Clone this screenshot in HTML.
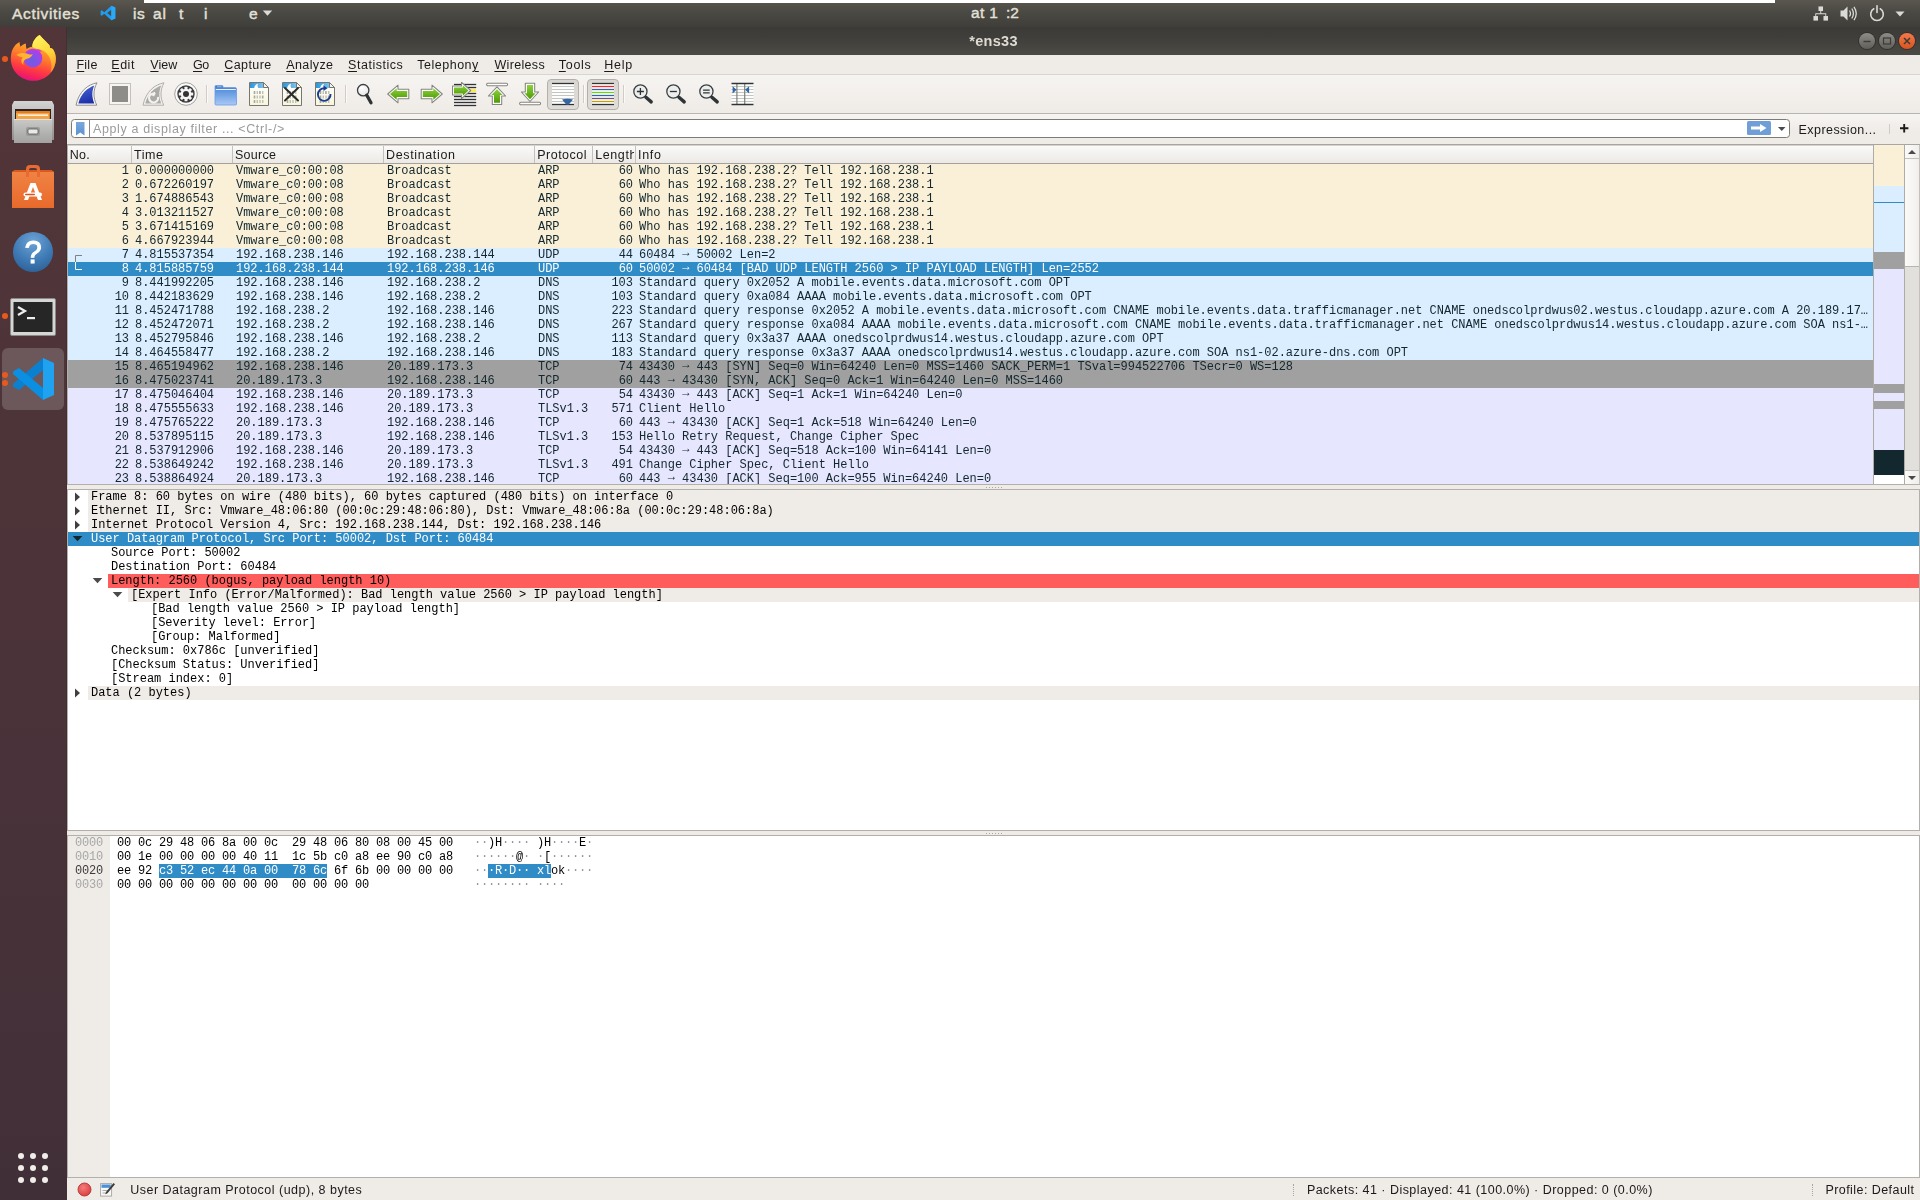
<!DOCTYPE html>
<html><head><meta charset="utf-8"><title>*ens33</title>
<style>
html,body{margin:0;padding:0;}
body{width:1920px;height:1200px;overflow:hidden;position:relative;background:#efebe7;font-family:"Liberation Sans",sans-serif;font-size:13px;color:#1a1a1a;}
.abs{position:absolute;}
svg{display:block;}
/* top bar */
#topbar{position:absolute;left:0;top:0;width:1920px;height:27px;background:linear-gradient(#5a5750 0px,#4b4943 12px,#3f3e3a 27px);}
#topstrip{position:absolute;left:144px;top:0;width:1631px;height:3px;background:#fff;}
.tb{position:absolute;color:#e4e0d8;font-size:15.5px;line-height:18px;top:5px;white-space:pre;-webkit-text-stroke:0.4px #e4e0d8;}
/* dock */
#dock{position:absolute;left:0;top:27px;width:67px;height:1173px;background:linear-gradient(#523538 0%,#4d3439 35%,#483239 70%,#412f38 100%);}
/* title bar */
#titlebar{position:absolute;left:67px;top:27px;width:1853px;height:28px;background:linear-gradient(#3b3a36 0px,#3f3e3a 10px,#4b4a45 28px);}
#title{position:absolute;left:0;width:1853px;top:5px;text-align:center;color:#dfdbd2;font-weight:bold;font-size:14.5px;line-height:18px;letter-spacing:0.3px;}
/* menubar */
#menubar{position:absolute;left:67px;top:55px;width:1853px;height:19px;background:#efebe7;border-bottom:1px solid #d9d5d0;}
.mi{position:absolute;top:2px;font-size:12.5px;line-height:16px;color:#1a1a1a;white-space:pre;}
.mi u{text-decoration:underline;text-underline-offset:2px;text-decoration-thickness:1px;}
#toolbar{position:absolute;left:67px;top:75px;width:1853px;height:38px;background:linear-gradient(#f6f4f1,#efebe7);border-bottom:1px solid #b9b6b1;}
#filterbar{position:absolute;left:67px;top:114px;width:1853px;height:30px;background:linear-gradient(#f7f5f2,#efebe7 60%);}
#finput{position:absolute;left:4px;top:5px;width:1719px;height:19px;box-sizing:border-box;border:1px solid #7e7b76;border-radius:3.5px;background:#fff;}
/* mono */
.mono{font-family:"Liberation Mono",monospace;font-size:12px;line-height:14px;}
.wbtn{position:absolute;top:6px;width:16px;height:16px;border-radius:8px;background:linear-gradient(#8e8d87,#5f5e59);box-shadow:0 0 0 1px #32312e;}
.wclose{background:linear-gradient(#f47a49,#d9541f);}
.ddot{position:absolute;width:6px;height:6px;border-radius:3px;background:#e8591d;}
#plist{position:absolute;left:68px;top:146px;width:1805px;height:338px;background:#fff;overflow:hidden;}
#phead{position:absolute;left:0;top:0;width:1805px;height:17px;background:linear-gradient(#fbfaf9,#ece9e5);border-bottom:1px solid #a5a29d;}
.hc{position:absolute;top:1px;font-size:12.5px;line-height:16px;color:#1a1a1a;white-space:pre;}
.hs{position:absolute;top:0;width:1px;height:17px;background:#c4c1bc;}
#prows{position:absolute;left:0;top:18px;width:1805px;}
.pr{position:relative;height:14px;width:1805px;color:#12272e;}
.pr span{position:absolute;top:0;white-space:pre;letter-spacing:-0.014px;}
.c1{left:0;width:61px;text-align:right;}
.c2{left:67px;}
.c3{left:168px;}
.c4{left:319px;}
.c5{left:470px;}
.c6{left:521px;width:44px;text-align:right;}
.c7{left:571px;}
.arp{background:#faf0d7;}
.udp{background:#daeeff;}
.tcp{background:#e7e6ff;}
.syn{background:#a0a0a0;}
.sel{background:#308cc6;color:#fff;}
#detail{position:absolute;left:68px;top:490px;width:1852px;height:340px;background:#fff;overflow:hidden;}
.dbg{position:absolute;height:14px;}
.dt{position:absolute;white-space:pre;height:14px;letter-spacing:-0.014px;}
#hexp{position:absolute;left:68px;top:836px;width:1852px;height:341px;background:#fff;overflow:hidden;}
#hexoff{position:absolute;left:0;top:0;width:42px;height:343px;background:#efebe7;}
.hx{position:absolute;white-space:pre;letter-spacing:-0.2px;color:#000;}
#status{position:absolute;left:67px;top:1178px;width:1853px;height:22px;background:#efebe7;}
.st{position:absolute;top:4px;font-size:12.5px;line-height:16px;white-space:pre;color:#1a1a1a;}
.tbp{position:absolute;top:4px;width:32px;height:31px;border:1px solid #b3b0ab;border-radius:4px;background:linear-gradient(#d9d6d2,#e0ddd9);box-sizing:border-box;}
#mmap{position:absolute;left:1874px;top:145px;width:30px;height:339px;background:#fff;overflow:hidden;}
#mmap div{position:absolute;left:0;width:30px;}
#vsb{position:absolute;left:1904px;top:145px;width:16px;height:339px;background:#e2e0dc;overflow:hidden;}
.hx i{font-style:normal;color:#8e9598;}
#win{position:absolute;left:0;top:0;width:1920px;height:1200px;will-change:transform;}
.pr b{font-weight:normal;position:relative;top:-2px;}

</style></head>
<body>
<div id="topbar">
 <div class="tb" style="left:12px;letter-spacing:0.68px;">Activities</div>
 <svg class="abs" style="left:100px;top:5px" width="16" height="16" viewBox="0 0 16 16"><path d="M11.300 0.800 L15.300 2.500 V13.500 L11.300 15.200 L4.300 8.800 L1.800 10.800 L0.600 10.100 V5.900 L1.800 5.200 L4.300 7.200 Z M11.300 4.700 L7.200 8 L11.300 11.300 Z" fill="#1f9cf0" fill-rule="evenodd"/><path d="M11.300 0.800 L15.300 2.500 V13.500 L11.300 15.200 Z" fill="#2aa9f5"/><path d="M11.300 4.700 L7.200 8 L11.300 11.300 Z" fill="#4b4943" opacity="0"/></svg>
 <div class="tb" style="left:133px;letter-spacing:0.46px;">is</div>
 <div class="tb" style="left:153px;letter-spacing:0.98px;">al</div>
 <div class="tb" style="left:179px;">t</div>
 <div class="tb" style="left:204px;">i</div>
 <div class="tb" style="left:249px;">e</div>
 <svg class="abs" style="left:262px;top:10px" width="11" height="7" viewBox="0 0 11 7"><path d="M0.800 0.500 H10.200 L5.500 5.800 Z" fill="#dadad6"/></svg>
 <div class="tb" style="left:971px;top:4px;letter-spacing:0.36px;">at 1</div>
 <div class="tb" style="left:1006px;top:4px;letter-spacing:0px;">:2</div>
 <!-- system tray -->
 <svg class="abs" style="left:1812.500px;top:5.700px" width="15.500" height="15.500" viewBox="0 0 17 17" fill="#dadad6"><rect x="6" y="0.500" width="5" height="5"/><rect x="0.500" y="11" width="5" height="5"/><rect x="11.500" y="11" width="5" height="5"/><path d="M8 5 H9 V8 H14.500 V11 H13.500 V9 H3.500 V11 H2.500 V8 H8 Z"/></svg>
 <svg class="abs" style="left:1840px;top:5px" width="18" height="17" viewBox="0 0 18 17"><path d="M0.500 5.500 H3.500 L7.500 1.500 V15.500 L3.500 11.500 H0.500 Z" fill="#dadad6"/><path d="M9.500 5.500 Q11.500 8.500 9.500 11.500 M11.800 3.500 Q15 8.500 11.800 13.500 M14 1.800 Q18.500 8.500 14 15.200" fill="none" stroke="#dadad6" stroke-width="1.300"/></svg>
 <svg class="abs" style="left:1869px;top:5px" width="16" height="17" viewBox="0 0 16 17"><path d="M4.800 3.800 A6.300 6.300 0 1 0 11.200 3.800" fill="none" stroke="#dadad6" stroke-width="1.600" stroke-linecap="round"/><path d="M8 0.800 V7.500" stroke="#dadad6" stroke-width="1.600" stroke-linecap="round"/></svg>
 <svg class="abs" style="left:1895px;top:11px" width="10" height="6" viewBox="0 0 10 6"><path d="M0.500 0.500 H9.500 L5 5.500 Z" fill="#dadad6"/></svg>
 <div id="topstrip"></div>
</div>

<div id="win">
<div id="dock">
 <!-- coordinates inside dock: y = page_y - 27 -->
 <div class="ddot" style="left:2px;top:29px;"></div>
 <!-- firefox -->
 <svg class="abs" style="left:10px;top:7px" width="47" height="48" viewBox="0 0 47 48">
  <defs>
   <linearGradient id="ffg" gradientUnits="userSpaceOnUse" x1="30" y1="4" x2="18" y2="47"><stop offset="0" stop-color="#ffd03a"/><stop offset="0.2" stop-color="#ffa526"/><stop offset="0.45" stop-color="#ff7a2e"/><stop offset="0.7" stop-color="#ff3f3f"/><stop offset="0.88" stop-color="#f5205e"/><stop offset="1" stop-color="#e01383"/></linearGradient>
   <radialGradient id="ffp" gradientUnits="userSpaceOnUse" cx="22" cy="27" r="11"><stop offset="0" stop-color="#6a5fe0"/><stop offset="0.6" stop-color="#8b4fe8"/><stop offset="1" stop-color="#b53be6"/></radialGradient>
   <linearGradient id="ffy" x1="0.2" y1="0" x2="0.6" y2="1"><stop offset="0" stop-color="#fff45f"/><stop offset="0.6" stop-color="#ffd43a"/><stop offset="1" stop-color="#ff9b2c"/></linearGradient>
  </defs>
  <path d="M29.700 0.900 C33 5 37 8 39.300 11.100 C39.600 12 40 13 40.100 14 C41.500 14 42.500 14.800 43.300 15.700 C45 18.500 45.800 21.500 45.800 24.700 C45.800 37 36 46.800 23.500 46.800 C11 46.800 0.800 37 0.800 24.700 C0.800 20.800 1.500 17.500 3 14.500 C4.500 11.500 7 9.300 9.500 8 C9.600 9.800 9.900 11.400 10.400 12.800 C11.800 11.200 13.700 10 15.800 9.400 C15.800 11.500 16 13.400 16.600 15.100 C18.300 13.900 20.200 13.200 22.300 12.800 C22.300 8 25 3.500 29.700 0.900 Z" fill="url(#ffg)"/>
  <path d="M29.700 0.900 C33 5 37 8 39.300 11.100 C39.600 12 40 13 40.100 14 C41.500 14 42.500 14.800 43.300 15.700 C45 18.500 45.800 21.500 45.800 24.700 C45.800 30 44 35 40.500 38.500 C43 31 41 22 34.500 17.500 C31 15 26 15.500 22.300 12.800 C22.300 8 25 3.500 29.700 0.900 Z" fill="url(#ffy)"/>
  <circle cx="22.900" cy="24.200" r="9.400" fill="url(#ffp)"/>
  <path d="M6.400 20.800 C10 18.500 15 18.500 18 20 C20 20.800 21.800 20.500 22.900 20.200 C21.500 23 19 24.300 16 25 C13.500 26.500 12.800 29 13.500 31 C10.500 28.500 11 25 12.800 23.500 C10.500 23 8 22.500 6.400 20.800 Z" fill="#ffb32e"/>
  <path d="M26.500 15.300 C29 15 31 16.300 31.800 17.800 C30 17.200 28.500 17.500 27.300 18.200 C27.500 17 27.200 16 26.500 15.300 Z" fill="#c53be8"/>
 </svg>
 <!-- files -->
 <svg class="abs" style="left:11px;top:73px" width="44" height="45" viewBox="0 0 44 45">
  <defs><linearGradient id="fg1" x1="0" y1="0" x2="0" y2="1"><stop offset="0" stop-color="#d4d4d2"/><stop offset="1" stop-color="#8f8f8d"/></linearGradient>
  <linearGradient id="fg2" x1="0" y1="0" x2="0" y2="1"><stop offset="0" stop-color="#c9c9c7"/><stop offset="1" stop-color="#a2a2a0"/></linearGradient></defs>
  <path d="M3 1 H41 L43 5 V40 H1 V5 Z" fill="url(#fg1)"/>
  <rect x="4" y="9" width="36" height="10" fill="#2a2320"/>
  <rect x="5" y="11" width="34" height="8" fill="#e67a22"/>
  <rect x="5" y="13" width="33" height="6" fill="#f3a445"/>
  <rect x="7" y="14.5" width="30" height="1.3" fill="#fff"/>
  <path d="M3 19 H41 V43 H3 Z" fill="url(#fg2)"/>
  <rect x="3" y="19" width="38" height="1" fill="#e2e2e0"/>
  <rect x="15" y="27" width="14" height="9" rx="2" fill="#9b9b99"/>
  <rect x="17" y="29" width="10" height="5" rx="1" fill="#e9e9e7" stroke="#555" stroke-width="0.8"/>
 </svg>
 <!-- software -->
 <svg class="abs" style="left:11px;top:137px" width="44" height="45" viewBox="0 0 44 45">
  <defs><linearGradient id="sg" x1="0" y1="0" x2="0" y2="1"><stop offset="0" stop-color="#f08445"/><stop offset="1" stop-color="#e86a2b"/></linearGradient></defs>
  <path d="M1 8 L4 6 H40 L43 8 V44 H1 Z" fill="url(#sg)"/>
  <path d="M4 6 H40 L43 8 H1 Z" fill="#d95a1d"/>
  <path d="M15 13 V5 Q15 1 19 1 H25 Q29 1 29 5 V13 H26 V6 Q26 4 24 4 H20 Q18 4 18 6 V13 Z" fill="#ea6a33"/>
  <path d="M19.5 19 H24.500 L31 36 H27 L22 23 L17 36 H13 Z" fill="#fff"/>
  <rect x="12.500" y="28.500" width="18.500" height="4" rx="2" fill="#fff"/>
  <rect x="14" y="29.700" width="10" height="1.500" rx="0.7" fill="#e3501a"/>
 </svg>
 <!-- help -->
 <svg class="abs" style="left:12px;top:204px" width="42" height="42" viewBox="0 0 42 42">
  <defs><radialGradient id="hg" cx="0.5" cy="0.25" r="0.8"><stop offset="0" stop-color="#6da3d6"/><stop offset="0.6" stop-color="#3f7ab5"/><stop offset="1" stop-color="#2c5f94"/></radialGradient></defs>
  <circle cx="21" cy="21" r="20" fill="url(#hg)"/>
  <text x="21" y="31.500" text-anchor="middle" font-family="Liberation Sans" font-size="31" fill="#fff" stroke="#fff" stroke-width="0.900">?</text>
 </svg>
 <!-- terminal -->
 <div class="ddot" style="left:2px;top:286px;"></div>
 <svg class="abs" style="left:10px;top:271px" width="46" height="38" viewBox="0 0 46 38">
  <rect x="0.500" y="0.500" width="45" height="37" rx="1.500" fill="#d6d6d4" stroke="#8a8a88"/>
  <rect x="3.500" y="4" width="39" height="30" fill="#262626"/>
  <path d="M8 9 L15 13 L8 17" fill="none" stroke="#eee" stroke-width="2.2"/>
  <rect x="17" y="19" width="8" height="2.200" fill="#eee"/>
 </svg>
 <!-- vscode -->
 <div class="abs" style="left:2px;top:321px;width:62px;height:62px;border-radius:6px;background:#6c575b;"></div>
 <div class="ddot" style="left:2px;top:345px;"></div>
 <div class="ddot" style="left:2px;top:353px;"></div>
 <svg class="abs" style="left:11px;top:330px" width="44" height="44" viewBox="0 0 44 44">
  <path d="M32 1 L43 6 V38 L32 43 Z" fill="#1fa2f0"/>
  <path d="M32 1 L32 12 L9 32 L4 29 L1 26 Z" fill="#0a7bcc" opacity="0.001"/>
  <path d="M32 1 V13 L8 33 L2 29.500 V27 Z" fill="#0b80d0"/>
  <path d="M32 43 V31 L8 11 L2 14.500 V17 Z" fill="#0a8fe2"/>
  <path d="M32 13 L20.500 22 L32 31 Z" fill="#6b565a" opacity="0"/>
 </svg>
 <!-- apps -->
 <svg class="abs" style="left:17px;top:1125px" width="32" height="32" viewBox="0 0 32 32" fill="#f0eeeb">
  <circle cx="4" cy="4" r="3"/><circle cx="16" cy="4" r="3"/><circle cx="28" cy="4" r="3"/>
  <circle cx="4" cy="16" r="3"/><circle cx="16" cy="16" r="3"/><circle cx="28" cy="16" r="3"/>
  <circle cx="4" cy="28" r="3"/><circle cx="16" cy="28" r="3"/><circle cx="28" cy="28" r="3"/>
 </svg>
</div>

<div id="titlebar">
 <div id="title">*ens33</div>
 <div class="wbtn" style="left:1792px;"><svg width="16" height="16" viewBox="0 0 16 16"><path d="M4.5 8.5 H11.5" stroke="#3c3b37" stroke-width="1.4"/></svg></div>
 <div class="wbtn" style="left:1812px;"><svg width="16" height="16" viewBox="0 0 16 16"><rect x="4.5" y="5" width="7" height="6" fill="none" stroke="#3c3b37" stroke-width="1.2"/></svg></div>
 <div class="wbtn wclose" style="left:1832px;"><svg width="16" height="16" viewBox="0 0 16 16"><path d="M5 5 L11 11 M11 5 L5 11" stroke="#3c3b37" stroke-width="1.5"/></svg></div>
</div>
<div id="menubar">
 <div class="mi" style="left:9.4px;letter-spacing:0.27px;"><u>F</u>ile</div>
 <div class="mi" style="left:44.3px;letter-spacing:0.51px;"><u>E</u>dit</div>
 <div class="mi" style="left:83.3px;letter-spacing:0.05px;"><u>V</u>iew</div>
 <div class="mi" style="left:126.0px;letter-spacing:-0.52px;"><u>G</u>o</div>
 <div class="mi" style="left:157.3px;letter-spacing:0.41px;"><u>C</u>apture</div>
 <div class="mi" style="left:219.3px;letter-spacing:0.38px;"><u>A</u>nalyze</div>
 <div class="mi" style="left:281.1px;letter-spacing:0.52px;"><u>S</u>tatistics</div>
 <div class="mi" style="left:350.3px;letter-spacing:0.5px;">Telephon<u>y</u></div>
 <div class="mi" style="left:427.4px;letter-spacing:0.33px;"><u>W</u>ireless</div>
 <div class="mi" style="left:491.8px;letter-spacing:0.69px;"><u>T</u>ools</div>
 <div class="mi" style="left:537.2px;letter-spacing:0.75px;"><u>H</u>elp</div>
</div>
<div id="filterbar">
 <div id="finput">
  <svg class="abs" style="left:4px;top:2px" width="9" height="14" viewBox="0 0 9 14"><defs><linearGradient id="bm" x1="0" y1="0" x2="0" y2="1"><stop offset="0" stop-color="#7ba7da"/><stop offset="1" stop-color="#5a92d0"/></linearGradient></defs><path d="M0 0 H8.500 V13.500 L4.250 10.500 L0 13.500 Z" fill="url(#bm)"/></svg>
  <div class="abs" style="left:17px;top:0;width:1px;height:17px;background:#8a8782;"></div>
  <div class="abs" style="left:21px;top:1px;font-size:12.5px;line-height:16px;color:#9b9b9b;white-space:pre;letter-spacing:0.62px;">Apply a display filter ... &lt;Ctrl-/&gt;</div>
  <svg class="abs" style="left:1675px;top:1px" width="24" height="14" viewBox="0 0 24 14"><rect x="0" y="0" width="24" height="14" rx="1.500" fill="#6f9fd6"/><path d="M4 5.500 H13 V3 L19.500 7 L13 11 V8.500 H4 Z" fill="#fff"/></svg>
  <svg class="abs" style="left:1706px;top:7px" width="8" height="4" viewBox="0 0 8 4"><path d="M0 0 H7.500 L3.750 4 Z" fill="#4a4a4a"/></svg>
 </div>
 <div class="abs" style="left:1731.600px;top:8px;font-size:12.5px;line-height:16px;white-space:pre;letter-spacing:0.43px;">Expression...</div>
 <div class="abs" style="left:1822px;top:10px;width:1px;height:10px;background:#cfccc7;"></div>
 <svg class="abs" style="left:1833px;top:10px" width="9" height="9" viewBox="0 0 9 9"><path d="M0 4.200 H8.400 M4.200 0 V8.400" stroke="#1a1a1a" stroke-width="1.900"/></svg>
</div>

<div id="toolbar">
<svg width="0" height="0" style="position:absolute"><defs>
<linearGradient id="finb" x1="0.3" y1="0" x2="0.6" y2="1"><stop offset="0" stop-color="#4a62d4"/><stop offset="1" stop-color="#1a2fa8"/></linearGradient>
<linearGradient id="fold" x1="0" y1="0" x2="0" y2="1"><stop offset="0" stop-color="#3b78c9"/><stop offset="0.25" stop-color="#5b93dd"/><stop offset="1" stop-color="#a9c9f7"/></linearGradient>
<linearGradient id="fband" x1="0" y1="0" x2="1" y2="0"><stop offset="0" stop-color="#2a96dc"/><stop offset="1" stop-color="#8ccaf0"/></linearGradient>
<linearGradient id="fbody" x1="0" y1="0" x2="0" y2="1"><stop offset="0" stop-color="#ffffff"/><stop offset="1" stop-color="#f7f6dc"/></linearGradient>
<linearGradient id="grn" x1="0" y1="0" x2="0" y2="1"><stop offset="0" stop-color="#8cd23c"/><stop offset="1" stop-color="#4e9a06"/></linearGradient>
<g id="fileico"><path d="M1.5 0.5 H15.5 L20.5 5.5 V23.5 H1.5 Z" fill="url(#fbody)" stroke="#77776f" stroke-width="1"/><path d="M2 1 H15.300 L18 3.700 V6 H2 Z" fill="url(#fband)"/><path d="M6 6.500 C6.500 4 8 2.300 10 1.800 C9.300 3.500 9.500 5 10.500 6.500 Z" fill="#fff"/><path d="M15.500 0.500 V5.500 H20.500 Z" fill="#f4f4ee" stroke="#77776f" stroke-width="1" stroke-linejoin="round"/></g>
<g id="bits" fill="#a8a8a0" transform="translate(0.7,0)"><rect x="5" y="9" width="1.600" height="3"/><rect x="8" y="9" width="1" height="3"/><rect x="10.400" y="9" width="1.600" height="3"/><rect x="13.600" y="9" width="1" height="3"/><rect x="5" y="13.500" width="1.600" height="3"/><rect x="8" y="13.500" width="1" height="3"/><rect x="10.800" y="13.500" width="1" height="3"/><rect x="13.200" y="13.500" width="1.600" height="3"/><rect x="5" y="18" width="1.600" height="3"/><rect x="8" y="18" width="1" height="3"/><rect x="10.800" y="18" width="1" height="3"/><rect x="13.600" y="18" width="1" height="3"/></g>
<radialGradient id="glass" cx="0.35" cy="0.3" r="0.8"><stop offset="0" stop-color="#ffffff"/><stop offset="1" stop-color="#e4e4e2"/></radialGradient>
<g id="mag"><circle cx="7.200" cy="7.200" r="5.700" fill="url(#glass)" stroke="#394045" stroke-width="1.300"/><path d="M10.800 12.300 L15 19.800" stroke="#2e3436" stroke-width="3.300" stroke-linecap="round"/><path d="M3.600 6 A3.800 3.800 0 0 1 6.500 3.400" fill="none" stroke="#fff" stroke-width="1"/></g>
<g id="zmag"><circle cx="8.400" cy="8.500" r="6.600" fill="#ededeb" stroke="#394045" stroke-width="1.300"/><path d="M13.900 14.300 L19.200 18.900" stroke="#2e3436" stroke-width="3.400" stroke-linecap="round"/></g>
</defs></svg>
 <svg class="abs" style="left:7.799999999999997px;top:7px" width="24" height="24" viewBox="0 0 24 24"><path d="M22 0.800 C13 2.500 4 9 1 23.200 H21.800 C18 16 18 8 22 0.800 Z" fill="#fafafa" stroke="#8e8e8e" stroke-width="1"/><path d="M19.300 3.600 C12.500 6 6 11.500 3.300 21.500 H19.300 C16.600 15 16.800 9 19.300 3.600 Z" fill="url(#finb)"/></svg>
 <svg class="abs" style="left:42px;top:8px" width="22" height="22" viewBox="0 0 22 22"><rect x="0.500" y="0.500" width="21" height="21" fill="#f6f5f2" stroke="#c4c2be"/><rect x="3" y="3" width="16" height="16" fill="#8d8c88"/></svg>
 <svg class="abs" style="left:75px;top:7px" width="24" height="24" viewBox="0 0 24 24"><path d="M22 0.800 C13 2.500 4 9 1 23.200 H21.800 C18 16 18 8 22 0.800 Z" fill="#f3f2f0" stroke="#b1afab" stroke-width="1"/><path d="M19.300 3.600 C12.500 6 6 11.500 3.300 21.500 H19.300 C16.600 15 16.800 9 19.300 3.600 Z" fill="#adaba7"/><path d="M9.500 12 A4.500 4.500 0 1 0 16 15" fill="none" stroke="#f3f2f0" stroke-width="2.200"/><path d="M7.500 11 H13.500 V13 L11 15 Z" fill="#f3f2f0" transform="rotate(-20 10 12)"/></svg>
 <svg class="abs" style="left:107px;top:7px" width="24" height="24" viewBox="0 0 24 24"><circle cx="12" cy="12" r="11.300" fill="#fbfbfb" stroke="#8a8a8a" stroke-width="0.800"/><circle cx="12" cy="12" r="8.700" fill="#3b3b3b"/><rect x="10.500" y="4.800" width="3" height="3.400" rx="0.500" fill="#f5f5f5" transform="rotate(0 12 12)"/><rect x="10.500" y="4.800" width="3" height="3.400" rx="0.500" fill="#f5f5f5" transform="rotate(45 12 12)"/><rect x="10.500" y="4.800" width="3" height="3.400" rx="0.500" fill="#f5f5f5" transform="rotate(90 12 12)"/><rect x="10.500" y="4.800" width="3" height="3.400" rx="0.500" fill="#f5f5f5" transform="rotate(135 12 12)"/><rect x="10.500" y="4.800" width="3" height="3.400" rx="0.500" fill="#f5f5f5" transform="rotate(180 12 12)"/><rect x="10.500" y="4.800" width="3" height="3.400" rx="0.500" fill="#f5f5f5" transform="rotate(225 12 12)"/><rect x="10.500" y="4.800" width="3" height="3.400" rx="0.500" fill="#f5f5f5" transform="rotate(270 12 12)"/><rect x="10.500" y="4.800" width="3" height="3.400" rx="0.500" fill="#f5f5f5" transform="rotate(315 12 12)"/><circle cx="12" cy="12" r="5.300" fill="#f5f5f5"/><circle cx="12" cy="12" r="3" fill="#333"/></svg>
 <div class="abs" style="left:139px;top:10px;width:1px;height:18px;background:#d0cdc8;box-shadow:1px 0 0 #fbfaf9;"></div>
 <div class="abs" style="left:278px;top:10px;width:1px;height:18px;background:#d0cdc8;box-shadow:1px 0 0 #fbfaf9;"></div>
 <div class="abs" style="left:516px;top:10px;width:1px;height:18px;background:#d0cdc8;box-shadow:1px 0 0 #fbfaf9;"></div>
 <div class="abs" style="left:556px;top:10px;width:1px;height:18px;background:#d0cdc8;box-shadow:1px 0 0 #fbfaf9;"></div>
 <svg class="abs" style="left:147px;top:8px" width="24" height="24" viewBox="0 0 24 24"><path d="M1 3.500 Q1 2.500 2 2.500 H8 Q9 2.500 9 3.500 V4.500 H21 Q22.500 4.500 22.500 6 V21 Q22.500 22 21.500 22 H2 Q1 22 1 21 Z" fill="url(#fold)" stroke="#6a9be6" stroke-width="0.800"/><rect x="1.800" y="6" width="20" height="1" fill="#e8f0fb"/><rect x="3" y="3.300" width="4.500" height="0.900" fill="#9fc0ee"/></svg>
 <svg class="abs" style="left:181px;top:7px" width="22" height="24" viewBox="0 0 22 24"><use href="#fileico"/><use href="#bits"/></svg>
 <svg class="abs" style="left:214px;top:7px" width="22" height="24" viewBox="0 0 22 24"><use href="#fileico"/><use href="#bits"/><path d="M4 6 L17 18.500 M17 6 L4 18.500" stroke="#2a2a2a" stroke-width="2" stroke-linecap="round"/></svg>
 <svg class="abs" style="left:247px;top:7px" width="22" height="24" viewBox="0 0 22 24"><use href="#fileico"/><use href="#bits"/><path d="M10.500 6.300 A6.300 6.300 0 1 0 16.500 12" fill="none" stroke="#1c3d8c" stroke-width="1.900"/><path d="M9.500 3.500 L13.500 6.300 L9.500 9 Z" fill="#1c3d8c"/></svg>
 <svg class="abs" style="left:289px;top:7.5px" width="22" height="24" viewBox="0 0 22 24"><use href="#mag"/></svg>
 <svg class="abs" style="left:320px;top:7px" width="24" height="24" viewBox="0 0 24 24"><path d="M0.700 12 L11 3.200 V7.300 H21.800 V16.700 H11 V20.800 Z" fill="#ffffff" stroke="#85857f" stroke-width="1.050" stroke-linejoin="round"/><path d="M3 12 L9.700 6.300 V9 H20.200 V15 H9.700 V17.700 Z" fill="url(#grn)"/></svg>
 <svg class="abs" style="left:352px;top:7px" width="24" height="24" viewBox="0 0 24 24"><g transform="translate(24,0) scale(-1,1)"><path d="M0.700 12 L11 3.200 V7.300 H21.800 V16.700 H11 V20.800 Z" fill="#ffffff" stroke="#85857f" stroke-width="1.050" stroke-linejoin="round"/><path d="M3 12 L9.700 6.300 V9 H20.200 V15 H9.700 V17.700 Z" fill="url(#grn)"/></g></svg>
 <svg class="abs" style="left:385px;top:7px" width="25" height="25" viewBox="0 0 25 25"><g stroke="#2e3436" stroke-width="1.300"><path d="M2 2.500 H24.200"/><path d="M2 5.500 H24.200"/><path d="M2 11.500 H24.200"/><path d="M2 14.500 H24.200"/><path d="M2 17.500 H24.200"/><path d="M2 20.500 H24.200"/><path d="M2 23.500 H24.200"/></g><rect x="17.500" y="7.200" width="6.700" height="2.800" fill="#fce94f"/><path d="M18.700 8.500 L9.500 0.300 V4 H0.500 V13 H9.500 V16.700 Z" fill="#ffffff" stroke="#85857f" stroke-width="1.050" stroke-linejoin="round"/><path d="M16.500 8.500 L10.800 3.300 V5.500 H2 V11.500 H10.800 V13.700 Z" fill="url(#grn)"/></svg>
 <svg class="abs" style="left:419px;top:7px" width="23" height="24" viewBox="0 0 23 24"><rect x="0.600" y="1.300" width="21" height="2.400" rx="1.200" fill="#ffffff" stroke="#85857f" stroke-width="1.050"/><path d="M11 4.800 L19.600 14 H15.700 V22.500 H6.300 V14 H2.400 Z" fill="#ffffff" stroke="#85857f" stroke-width="1.050" stroke-linejoin="round"/><path d="M11 7.200 L16.600 13 H14 V20.800 H8 V13 H5.400 Z" fill="url(#grn)"/></svg>
 <svg class="abs" style="left:452px;top:7px" width="23" height="24" viewBox="0 0 23 24"><rect x="0.600" y="20.300" width="21" height="2.400" rx="1.200" fill="#ffffff" stroke="#85857f" stroke-width="1.050"/><path d="M11 19.500 L19.600 10 H15.700 V1.300 H6.300 V10 H2.400 Z" fill="#ffffff" stroke="#85857f" stroke-width="1.050" stroke-linejoin="round"/><path d="M11 17.300 L16.600 11.200 H14 V3 H8 V11.200 H5.400 Z" fill="url(#grn)"/></svg>
 <div class="tbp" style="left:480px;"></div>
 <svg class="abs" style="left:484px;top:7px" width="24" height="24" viewBox="0 0 24 24"><rect x="1" y="1" width="22" height="22" fill="#fff"/><path d="M1 1.500 H23" stroke="#2e3436" stroke-width="1.300"/><g stroke="#c3c6c0" stroke-width="1.100"><path d="M1 4.500 H23"/><path d="M1 7.500 H23"/><path d="M1 10.500 H23"/><path d="M1 13.500 H23"/><path d="M1 16.500 H23"/><path d="M1 19.500 H23"/></g><path d="M1 22.500 H23" stroke="#2e3436" stroke-width="1.300"/><path d="M11 17.500 Q16.500 16 22 17.500 L18.800 21.300 Q18 22.800 16.500 22.800 Q15 22.800 14.200 21.300 Z" fill="#3465a4"/></svg>
 <div class="tbp" style="left:520px;"></div>
 <svg class="abs" style="left:524px;top:7px" width="24" height="24" viewBox="0 0 24 24"><rect x="1" y="1" width="22" height="22" fill="#fff"/><g stroke-width="1.300"><path d="M1 1.500 H23" stroke="#2e3436"/><path d="M1 4.500 H23" stroke="#ef2929"/><path d="M1 7.500 H23" stroke="#3465a4"/><path d="M1 10.500 H23" stroke="#73d216"/><path d="M1 13.500 H23" stroke="#3465a4"/><path d="M1 16.500 H23" stroke="#75507b"/><path d="M1 19.500 H23" stroke="#c4a000"/><path d="M1 22.500 H23" stroke="#2e3436"/></g></svg>
 <svg class="abs" style="left:565px;top:8px" width="22" height="24" viewBox="0 0 22 24"><use href="#zmag"/><path d="M4.900 8.500 H11.900 M8.400 5 V12" stroke="#2e3436" stroke-width="1.300"/></svg>
 <svg class="abs" style="left:598.2px;top:8px" width="22" height="24" viewBox="0 0 22 24"><use href="#zmag"/><path d="M4.900 8.500 H11.900" stroke="#2e3436" stroke-width="1.300"/></svg>
 <svg class="abs" style="left:631px;top:8px" width="22" height="24" viewBox="0 0 22 24"><use href="#zmag"/><path d="M5.100 7.200 H11.700 M5.100 9.900 H11.700" stroke="#2e3436" stroke-width="1.200"/></svg>
 <svg class="abs" style="left:663.5px;top:7px" width="23" height="24" viewBox="0 0 23 24"><rect x="0.500" y="1" width="22" height="22" fill="#fff"/><g stroke="#c3c6c0" stroke-width="1.100"><path d="M0.500 4.500 H22.500"/><path d="M0.500 7.500 H22.500"/><path d="M0.500 10.500 H22.500"/><path d="M0.500 13.500 H22.500"/><path d="M0.500 16.500 H22.500"/><path d="M0.500 19.500 H22.500"/></g><path d="M5.900 1 V23 M13.700 1 V23" stroke="#7d807b" stroke-width="1.200"/><path d="M0.500 1.500 H22.500 M0.500 22.500 H22.500" stroke="#2e3436" stroke-width="1.300"/><path d="M1.600 4.200 L5.600 7.800 L1.600 11.400 Z M18.100 4.200 L14.100 7.800 L18.100 11.400 Z" fill="#3465a4"/></svg>
</div>

<div id="plist">
 <div id="phead">
  <div class="hc" style="left:1.7px;letter-spacing:0.3px;">No.</div>
  <div class="hc" style="left:66px;letter-spacing:0.55px;">Time</div>
  <div class="hc" style="left:167px;letter-spacing:0.27px;">Source</div>
  <div class="hc" style="left:318px;letter-spacing:0.64px;">Destination</div>
  <div class="hc" style="left:469.2px;letter-spacing:0.5px;">Protocol</div>
  <div class="hc" style="left:527.2px;letter-spacing:0.6px;width:39px;overflow:hidden;">Length</div>
  <div class="hc" style="left:570px;letter-spacing:0.7px;">Info</div>
  <div class="hs" style="left:63px;"></div>
  <div class="hs" style="left:164px;"></div>
  <div class="hs" style="left:315px;"></div>
  <div class="hs" style="left:466px;"></div>
  <div class="hs" style="left:524px;"></div>
  <div class="hs" style="left:567px;"></div>
 </div>
 <div id="prows" class="mono">
  <div class="pr arp"><span class="c1">1</span><span class="c2">0.000000000</span><span class="c3">Vmware_c0:00:08</span><span class="c4">Broadcast</span><span class="c5">ARP</span><span class="c6">60</span><span class="c7">Who has 192.168.238.2? Tell 192.168.238.1</span></div>
  <div class="pr arp"><span class="c1">2</span><span class="c2">0.672260197</span><span class="c3">Vmware_c0:00:08</span><span class="c4">Broadcast</span><span class="c5">ARP</span><span class="c6">60</span><span class="c7">Who has 192.168.238.2? Tell 192.168.238.1</span></div>
  <div class="pr arp"><span class="c1">3</span><span class="c2">1.674886543</span><span class="c3">Vmware_c0:00:08</span><span class="c4">Broadcast</span><span class="c5">ARP</span><span class="c6">60</span><span class="c7">Who has 192.168.238.2? Tell 192.168.238.1</span></div>
  <div class="pr arp"><span class="c1">4</span><span class="c2">3.013211527</span><span class="c3">Vmware_c0:00:08</span><span class="c4">Broadcast</span><span class="c5">ARP</span><span class="c6">60</span><span class="c7">Who has 192.168.238.2? Tell 192.168.238.1</span></div>
  <div class="pr arp"><span class="c1">5</span><span class="c2">3.671415169</span><span class="c3">Vmware_c0:00:08</span><span class="c4">Broadcast</span><span class="c5">ARP</span><span class="c6">60</span><span class="c7">Who has 192.168.238.2? Tell 192.168.238.1</span></div>
  <div class="pr arp"><span class="c1">6</span><span class="c2">4.667923944</span><span class="c3">Vmware_c0:00:08</span><span class="c4">Broadcast</span><span class="c5">ARP</span><span class="c6">60</span><span class="c7">Who has 192.168.238.2? Tell 192.168.238.1</span></div>
  <div class="pr udp"><span class="c1">7</span><span class="c2">4.815537354</span><span class="c3">192.168.238.146</span><span class="c4">192.168.238.144</span><span class="c5">UDP</span><span class="c6">44</span><span class="c7">60484 <b>→</b> 50002 Len=2</span></div>
  <div class="pr sel"><span class="c1">8</span><span class="c2">4.815885759</span><span class="c3">192.168.238.144</span><span class="c4">192.168.238.146</span><span class="c5">UDP</span><span class="c6">60</span><span class="c7">50002 <b>→</b> 60484 [BAD UDP LENGTH 2560 &gt; IP PAYLOAD LENGTH] Len=2552</span></div>
  <div class="pr udp"><span class="c1">9</span><span class="c2">8.441992205</span><span class="c3">192.168.238.146</span><span class="c4">192.168.238.2</span><span class="c5">DNS</span><span class="c6">103</span><span class="c7">Standard query 0x2052 A mobile.events.data.microsoft.com OPT</span></div>
  <div class="pr udp"><span class="c1">10</span><span class="c2">8.442183629</span><span class="c3">192.168.238.146</span><span class="c4">192.168.238.2</span><span class="c5">DNS</span><span class="c6">103</span><span class="c7">Standard query 0xa084 AAAA mobile.events.data.microsoft.com OPT</span></div>
  <div class="pr udp"><span class="c1">11</span><span class="c2">8.452471788</span><span class="c3">192.168.238.2</span><span class="c4">192.168.238.146</span><span class="c5">DNS</span><span class="c6">223</span><span class="c7">Standard query response 0x2052 A mobile.events.data.microsoft.com CNAME mobile.events.data.trafficmanager.net CNAME onedscolprdwus02.westus.cloudapp.azure.com A 20.189.17…</span></div>
  <div class="pr udp"><span class="c1">12</span><span class="c2">8.452472071</span><span class="c3">192.168.238.2</span><span class="c4">192.168.238.146</span><span class="c5">DNS</span><span class="c6">267</span><span class="c7">Standard query response 0xa084 AAAA mobile.events.data.microsoft.com CNAME mobile.events.data.trafficmanager.net CNAME onedscolprdwus14.westus.cloudapp.azure.com SOA ns1-…</span></div>
  <div class="pr udp"><span class="c1">13</span><span class="c2">8.452795846</span><span class="c3">192.168.238.146</span><span class="c4">192.168.238.2</span><span class="c5">DNS</span><span class="c6">113</span><span class="c7">Standard query 0x3a37 AAAA onedscolprdwus14.westus.cloudapp.azure.com OPT</span></div>
  <div class="pr udp"><span class="c1">14</span><span class="c2">8.464558477</span><span class="c3">192.168.238.2</span><span class="c4">192.168.238.146</span><span class="c5">DNS</span><span class="c6">183</span><span class="c7">Standard query response 0x3a37 AAAA onedscolprdwus14.westus.cloudapp.azure.com SOA ns1-02.azure-dns.com OPT</span></div>
  <div class="pr syn"><span class="c1">15</span><span class="c2">8.465194962</span><span class="c3">192.168.238.146</span><span class="c4">20.189.173.3</span><span class="c5">TCP</span><span class="c6">74</span><span class="c7">43430 <b>→</b> 443 [SYN] Seq=0 Win=64240 Len=0 MSS=1460 SACK_PERM=1 TSval=994522706 TSecr=0 WS=128</span></div>
  <div class="pr syn"><span class="c1">16</span><span class="c2">8.475023741</span><span class="c3">20.189.173.3</span><span class="c4">192.168.238.146</span><span class="c5">TCP</span><span class="c6">60</span><span class="c7">443 <b>→</b> 43430 [SYN, ACK] Seq=0 Ack=1 Win=64240 Len=0 MSS=1460</span></div>
  <div class="pr tcp"><span class="c1">17</span><span class="c2">8.475046404</span><span class="c3">192.168.238.146</span><span class="c4">20.189.173.3</span><span class="c5">TCP</span><span class="c6">54</span><span class="c7">43430 <b>→</b> 443 [ACK] Seq=1 Ack=1 Win=64240 Len=0</span></div>
  <div class="pr tcp"><span class="c1">18</span><span class="c2">8.475555633</span><span class="c3">192.168.238.146</span><span class="c4">20.189.173.3</span><span class="c5">TLSv1.3</span><span class="c6">571</span><span class="c7">Client Hello</span></div>
  <div class="pr tcp"><span class="c1">19</span><span class="c2">8.475765222</span><span class="c3">20.189.173.3</span><span class="c4">192.168.238.146</span><span class="c5">TCP</span><span class="c6">60</span><span class="c7">443 <b>→</b> 43430 [ACK] Seq=1 Ack=518 Win=64240 Len=0</span></div>
  <div class="pr tcp"><span class="c1">20</span><span class="c2">8.537895115</span><span class="c3">20.189.173.3</span><span class="c4">192.168.238.146</span><span class="c5">TLSv1.3</span><span class="c6">153</span><span class="c7">Hello Retry Request, Change Cipher Spec</span></div>
  <div class="pr tcp"><span class="c1">21</span><span class="c2">8.537912906</span><span class="c3">192.168.238.146</span><span class="c4">20.189.173.3</span><span class="c5">TCP</span><span class="c6">54</span><span class="c7">43430 <b>→</b> 443 [ACK] Seq=518 Ack=100 Win=64141 Len=0</span></div>
  <div class="pr tcp"><span class="c1">22</span><span class="c2">8.538649242</span><span class="c3">192.168.238.146</span><span class="c4">20.189.173.3</span><span class="c5">TLSv1.3</span><span class="c6">491</span><span class="c7">Change Cipher Spec, Client Hello</span></div>
  <div class="pr tcp"><span class="c1">23</span><span class="c2">8.538864924</span><span class="c3">20.189.173.3</span><span class="c4">192.168.238.146</span><span class="c5">TCP</span><span class="c6">60</span><span class="c7">443 <b>→</b> 43430 [ACK] Seq=100 Ack=955 Win=64240 Len=0</span></div>
 </div>
 <svg class="abs" style="left:7px;top:109px" width="8" height="15" viewBox="0 0 8 15"><path d="M7 0.5 H0.5 V7" fill="none" stroke="#808080" stroke-width="1"/><path d="M0.5 7 V14.5 H7" fill="none" stroke="#ffffff" stroke-width="1"/></svg>
</div>

<div id="detail" class="mono">
 <div class="dbg" style="left:20px;top:0px;width:1832px;background:#efebe7;"></div>
 <svg class="abs" style="left:5px;top:2px" width="9" height="10" viewBox="0 0 9 10"><path d="M2 0.5 L7 5 L2 9.500 Z" fill="#404040"/></svg>
 <div class="dt" style="left:23px;top:0px;color:#000;">Frame 8: 60 bytes on wire (480 bits), 60 bytes captured (480 bits) on interface 0</div>
 <div class="dbg" style="left:20px;top:14px;width:1832px;background:#efebe7;"></div>
 <svg class="abs" style="left:5px;top:16px" width="9" height="10" viewBox="0 0 9 10"><path d="M2 0.5 L7 5 L2 9.500 Z" fill="#404040"/></svg>
 <div class="dt" style="left:23px;top:14px;color:#000;">Ethernet II, Src: Vmware_48:06:80 (00:0c:29:48:06:80), Dst: Vmware_48:06:8a (00:0c:29:48:06:8a)</div>
 <div class="dbg" style="left:20px;top:28px;width:1832px;background:#efebe7;"></div>
 <svg class="abs" style="left:5px;top:30px" width="9" height="10" viewBox="0 0 9 10"><path d="M2 0.5 L7 5 L2 9.500 Z" fill="#404040"/></svg>
 <div class="dt" style="left:23px;top:28px;color:#000;">Internet Protocol Version 4, Src: 192.168.238.144, Dst: 192.168.238.146</div>
 <div class="dbg" style="left:0;top:42px;width:1852px;background:#308cc6;"></div>
 <svg class="abs" style="left:4px;top:45px" width="11" height="7" viewBox="0 0 11 7"><path d="M0.700 1 H10.300 L5.500 6.300 Z" fill="#12272e"/></svg>
 <div class="dt" style="left:23px;top:42px;color:#fff;">User Datagram Protocol, Src Port: 50002, Dst Port: 60484</div>
 <div class="dt" style="left:43px;top:56px;color:#000;">Source Port: 50002</div>
 <div class="dt" style="left:43px;top:70px;color:#000;">Destination Port: 60484</div>
 <div class="dbg" style="left:40px;top:84px;width:1812px;background:#ff5c5c;"></div>
 <svg class="abs" style="left:24px;top:87px" width="11" height="7" viewBox="0 0 11 7"><path d="M0.700 1 H10.300 L5.500 6.300 Z" fill="#4a4a4a"/></svg>
 <div class="dt" style="left:43px;top:84px;color:#000;">Length: 2560 (bogus, payload length 10)</div>
 <div class="dbg" style="left:60px;top:98px;width:1792px;background:#efebe7;"></div>
 <svg class="abs" style="left:44px;top:101px" width="11" height="7" viewBox="0 0 11 7"><path d="M0.700 1 H10.300 L5.500 6.300 Z" fill="#4a4a4a"/></svg>
 <div class="dt" style="left:63px;top:98px;color:#000;">[Expert Info (Error/Malformed): Bad length value 2560 &gt; IP payload length]</div>
 <div class="dt" style="left:83px;top:112px;color:#000;">[Bad length value 2560 &gt; IP payload length]</div>
 <div class="dt" style="left:83px;top:126px;color:#000;">[Severity level: Error]</div>
 <div class="dt" style="left:83px;top:140px;color:#000;">[Group: Malformed]</div>
 <div class="dt" style="left:43px;top:154px;color:#000;">Checksum: 0x786c [unverified]</div>
 <div class="dt" style="left:43px;top:168px;color:#000;">[Checksum Status: Unverified]</div>
 <div class="dt" style="left:43px;top:182px;color:#000;">[Stream index: 0]</div>
 <div class="dbg" style="left:20px;top:196px;width:1832px;background:#efebe7;"></div>
 <svg class="abs" style="left:5px;top:198px" width="9" height="10" viewBox="0 0 9 10"><path d="M2 0.5 L7 5 L2 9.500 Z" fill="#404040"/></svg>
 <div class="dt" style="left:23px;top:196px;color:#000;">Data (2 bytes)</div>
</div>

<div id="hexp" class="mono">
 <div id="hexoff"></div>
 <div class="abs" style="left:91px;top:28px;width:168px;height:14px;background:#308cc6;"></div>
 <div class="abs" style="left:420px;top:28px;width:63px;height:14px;background:#308cc6;"></div>
 <div class="hx" style="left:7px;top:0;color:#a8a8a8;">0000</div>
 <div class="hx" style="left:7px;top:14px;color:#a8a8a8;">0010</div>
 <div class="hx" style="left:7px;top:28px;color:#3c3c3c;">0020</div>
 <div class="hx" style="left:7px;top:42px;color:#a8a8a8;">0030</div>
 <div class="hx" style="left:49px;top:0;">00 0c 29 48 06 8a 00 0c  29 48 06 80 08 00 45 00</div>
 <div class="hx" style="left:49px;top:14px;">00 1e 00 00 00 00 40 11  1c 5b c0 a8 ee 90 c0 a8</div>
 <div class="hx" style="left:49px;top:28px;">ee 92 <span style="color:#fff">c3 52 ec 44 0a 00  78 6c</span> 6f 6b 00 00 00 00</div>
 <div class="hx" style="left:49px;top:42px;">00 00 00 00 00 00 00 00  00 00 00 00</div>
 <div class="hx" style="left:406px;top:0;"><i>··</i>)H<i>····</i> )H<i>····</i>E<i>·</i></div>
 <div class="hx" style="left:406px;top:14px;"><i>······</i>@<i>·</i> <i>·</i>[<i>······</i></div>
 <div class="hx" style="left:406px;top:28px;"><i>··</i><span style="color:#fff">·R·D·· xl</span>ok<i>····</i></div>
 <div class="hx" style="left:406px;top:42px;"><i>········ ····</i></div>
</div>

<div id="status">
 <svg class="abs" style="left:10px;top:4px" width="15" height="15" viewBox="0 0 15 15"><defs><radialGradient id="rg" cx="0.4" cy="0.35" r="0.7"><stop offset="0" stop-color="#f47c7c"/><stop offset="1" stop-color="#dc3c3c"/></radialGradient></defs><circle cx="7.500" cy="7.500" r="6.500" fill="url(#rg)" stroke="#b03434" stroke-width="0.900"/></svg>
 <svg class="abs" style="left:33px;top:4px" width="16" height="15" viewBox="0 0 16 15"><rect x="0.600" y="1.600" width="11" height="12.500" fill="#f7f7f5" stroke="#a4a4a0" stroke-width="0.900"/><rect x="1.500" y="2.500" width="9.200" height="3.300" fill="#4a90d9"/><path d="M2.500 8.500 H8 M2.500 11 H7" stroke="#aaa" stroke-width="1"/><path d="M13.500 1 L15 2.300 L7.500 11.200 L5.300 12.300 L6 10 Z" fill="#3c3c3c"/></svg>
 <div class="st" style="left:63.200px;letter-spacing:0.49px;">User Datagram Protocol (udp), 8 bytes</div>
 <div class="abs" style="left:1226px;top:6px;width:0;height:12px;border-left:1px dotted #a8a5a0;"></div>
 <div class="st" style="left:1239.900px;letter-spacing:0.47px;">Packets: 41 · Displayed: 41 (100.0%) · Dropped: 0 (0.0%)</div>
 <div class="abs" style="left:1745px;top:6px;width:0;height:12px;border-left:1px dotted #a8a5a0;"></div>
 <div class="st" style="left:1758.400px;letter-spacing:0.44px;">Profile: Default</div>
</div>

<!-- frame lines around packet list -->
<div class="abs" style="left:67px;top:144px;width:1853px;height:1px;background:#a9a6a1;"></div>
<div class="abs" style="left:67px;top:145px;width:1853px;height:1px;background:#d6d3ce;"></div>
<div class="abs" style="left:1873px;top:145px;width:1px;height:340px;background:#aeaba6;"></div>
<!-- minimap -->
<div id="mmap">
 <div style="top:0;height:41px;background:#faf0d7;"></div>
 <div style="top:41px;height:66px;background:#daeeff;"></div>
 <div style="top:57px;height:1px;background:#308cc6;"></div>
 <div style="top:107px;height:17px;background:#a0a0a0;"></div>
 <div style="top:124px;height:115px;background:#e7e6ff;"></div>
 <div style="top:239px;height:9px;background:#a0a0a0;"></div>
 <div style="top:248px;height:8px;background:#e7e6ff;"></div>
 <div style="top:256px;height:8px;background:#a0a0a0;"></div>
 <div style="top:264px;height:41px;background:#e7e6ff;"></div>
 <div style="top:305px;height:25px;background:#12272e;"></div>
 <div style="top:330px;height:9px;background:#ffffff;"></div>
</div>
<!-- scrollbar -->
<div id="vsb">
 <div class="abs" style="left:0;top:0;width:1px;height:340px;background:#aeaba6;"></div>
 <div class="abs" style="left:15px;top:0;width:1px;height:340px;background:#c4c1bc;"></div>
 <div class="abs" style="left:1px;top:0;width:14px;height:13px;background:linear-gradient(90deg,#fbfaf9,#f1efec);border-bottom:1px solid #c4c1bc;"></div>
 <svg class="abs" style="left:4px;top:5px" width="8" height="4" viewBox="0 0 8 4"><path d="M0 4 L4 0 L8 4 Z" fill="#4a4a4a"/></svg>
 <div class="abs" style="left:1px;top:14px;width:14px;height:107px;background:linear-gradient(90deg,#fcfbfa,#f1efec);border-bottom:1px solid #b8b5b0;"></div>
 <div class="abs" style="left:1px;top:325px;width:14px;height:14px;background:linear-gradient(90deg,#fbfaf9,#f1efec);border-top:1px solid #c4c1bc;"></div>
 <svg class="abs" style="left:4px;top:331px" width="8" height="4" viewBox="0 0 8 4"><path d="M0 0 L4 4 L8 0 Z" fill="#4a4a4a"/></svg>
</div>
<!-- splitters -->
<div class="abs" style="left:67px;top:484px;width:1853px;height:1px;background:#b3b0ab;"></div>
<div class="abs" style="left:67px;top:489px;width:1853px;height:1px;background:#b3b0ab;"></div>
<div class="abs" style="left:67px;top:830px;width:1853px;height:1px;background:#b3b0ab;"></div>
<div class="abs" style="left:67px;top:835px;width:1853px;height:1px;background:#b3b0ab;"></div>
<div class="abs" style="left:67px;top:1177px;width:1853px;height:1px;background:#b3b0ab;"></div>
<div class="abs" style="left:67px;top:145px;width:1px;height:340px;background:#b3b0ab;"></div>
<div class="abs" style="left:67px;top:490px;width:1px;height:340px;background:#b3b0ab;"></div>
<div class="abs" style="left:67px;top:836px;width:1px;height:341px;background:#b3b0ab;"></div>
<div class="abs" style="left:1919px;top:490px;width:1px;height:340px;background:#b3b0ab;"></div>
<div class="abs" style="left:1919px;top:836px;width:1px;height:341px;background:#b3b0ab;"></div>
<div class="abs" style="left:66px;top:27px;width:1px;height:1173px;background:#412f33;"></div>
<div class="abs" style="left:986px;top:487px;width:1px;height:1px;background:#aaa7a2;"></div>
<div class="abs" style="left:989px;top:487px;width:1px;height:1px;background:#aaa7a2;"></div>
<div class="abs" style="left:992px;top:487px;width:1px;height:1px;background:#aaa7a2;"></div>
<div class="abs" style="left:995px;top:487px;width:1px;height:1px;background:#aaa7a2;"></div>
<div class="abs" style="left:998px;top:487px;width:1px;height:1px;background:#aaa7a2;"></div>
<div class="abs" style="left:1001px;top:487px;width:1px;height:1px;background:#aaa7a2;"></div>
<div class="abs" style="left:986px;top:833px;width:1px;height:1px;background:#aaa7a2;"></div>
<div class="abs" style="left:989px;top:833px;width:1px;height:1px;background:#aaa7a2;"></div>
<div class="abs" style="left:992px;top:833px;width:1px;height:1px;background:#aaa7a2;"></div>
<div class="abs" style="left:995px;top:833px;width:1px;height:1px;background:#aaa7a2;"></div>
<div class="abs" style="left:998px;top:833px;width:1px;height:1px;background:#aaa7a2;"></div>
<div class="abs" style="left:1001px;top:833px;width:1px;height:1px;background:#aaa7a2;"></div>

</div>
</body></html>
